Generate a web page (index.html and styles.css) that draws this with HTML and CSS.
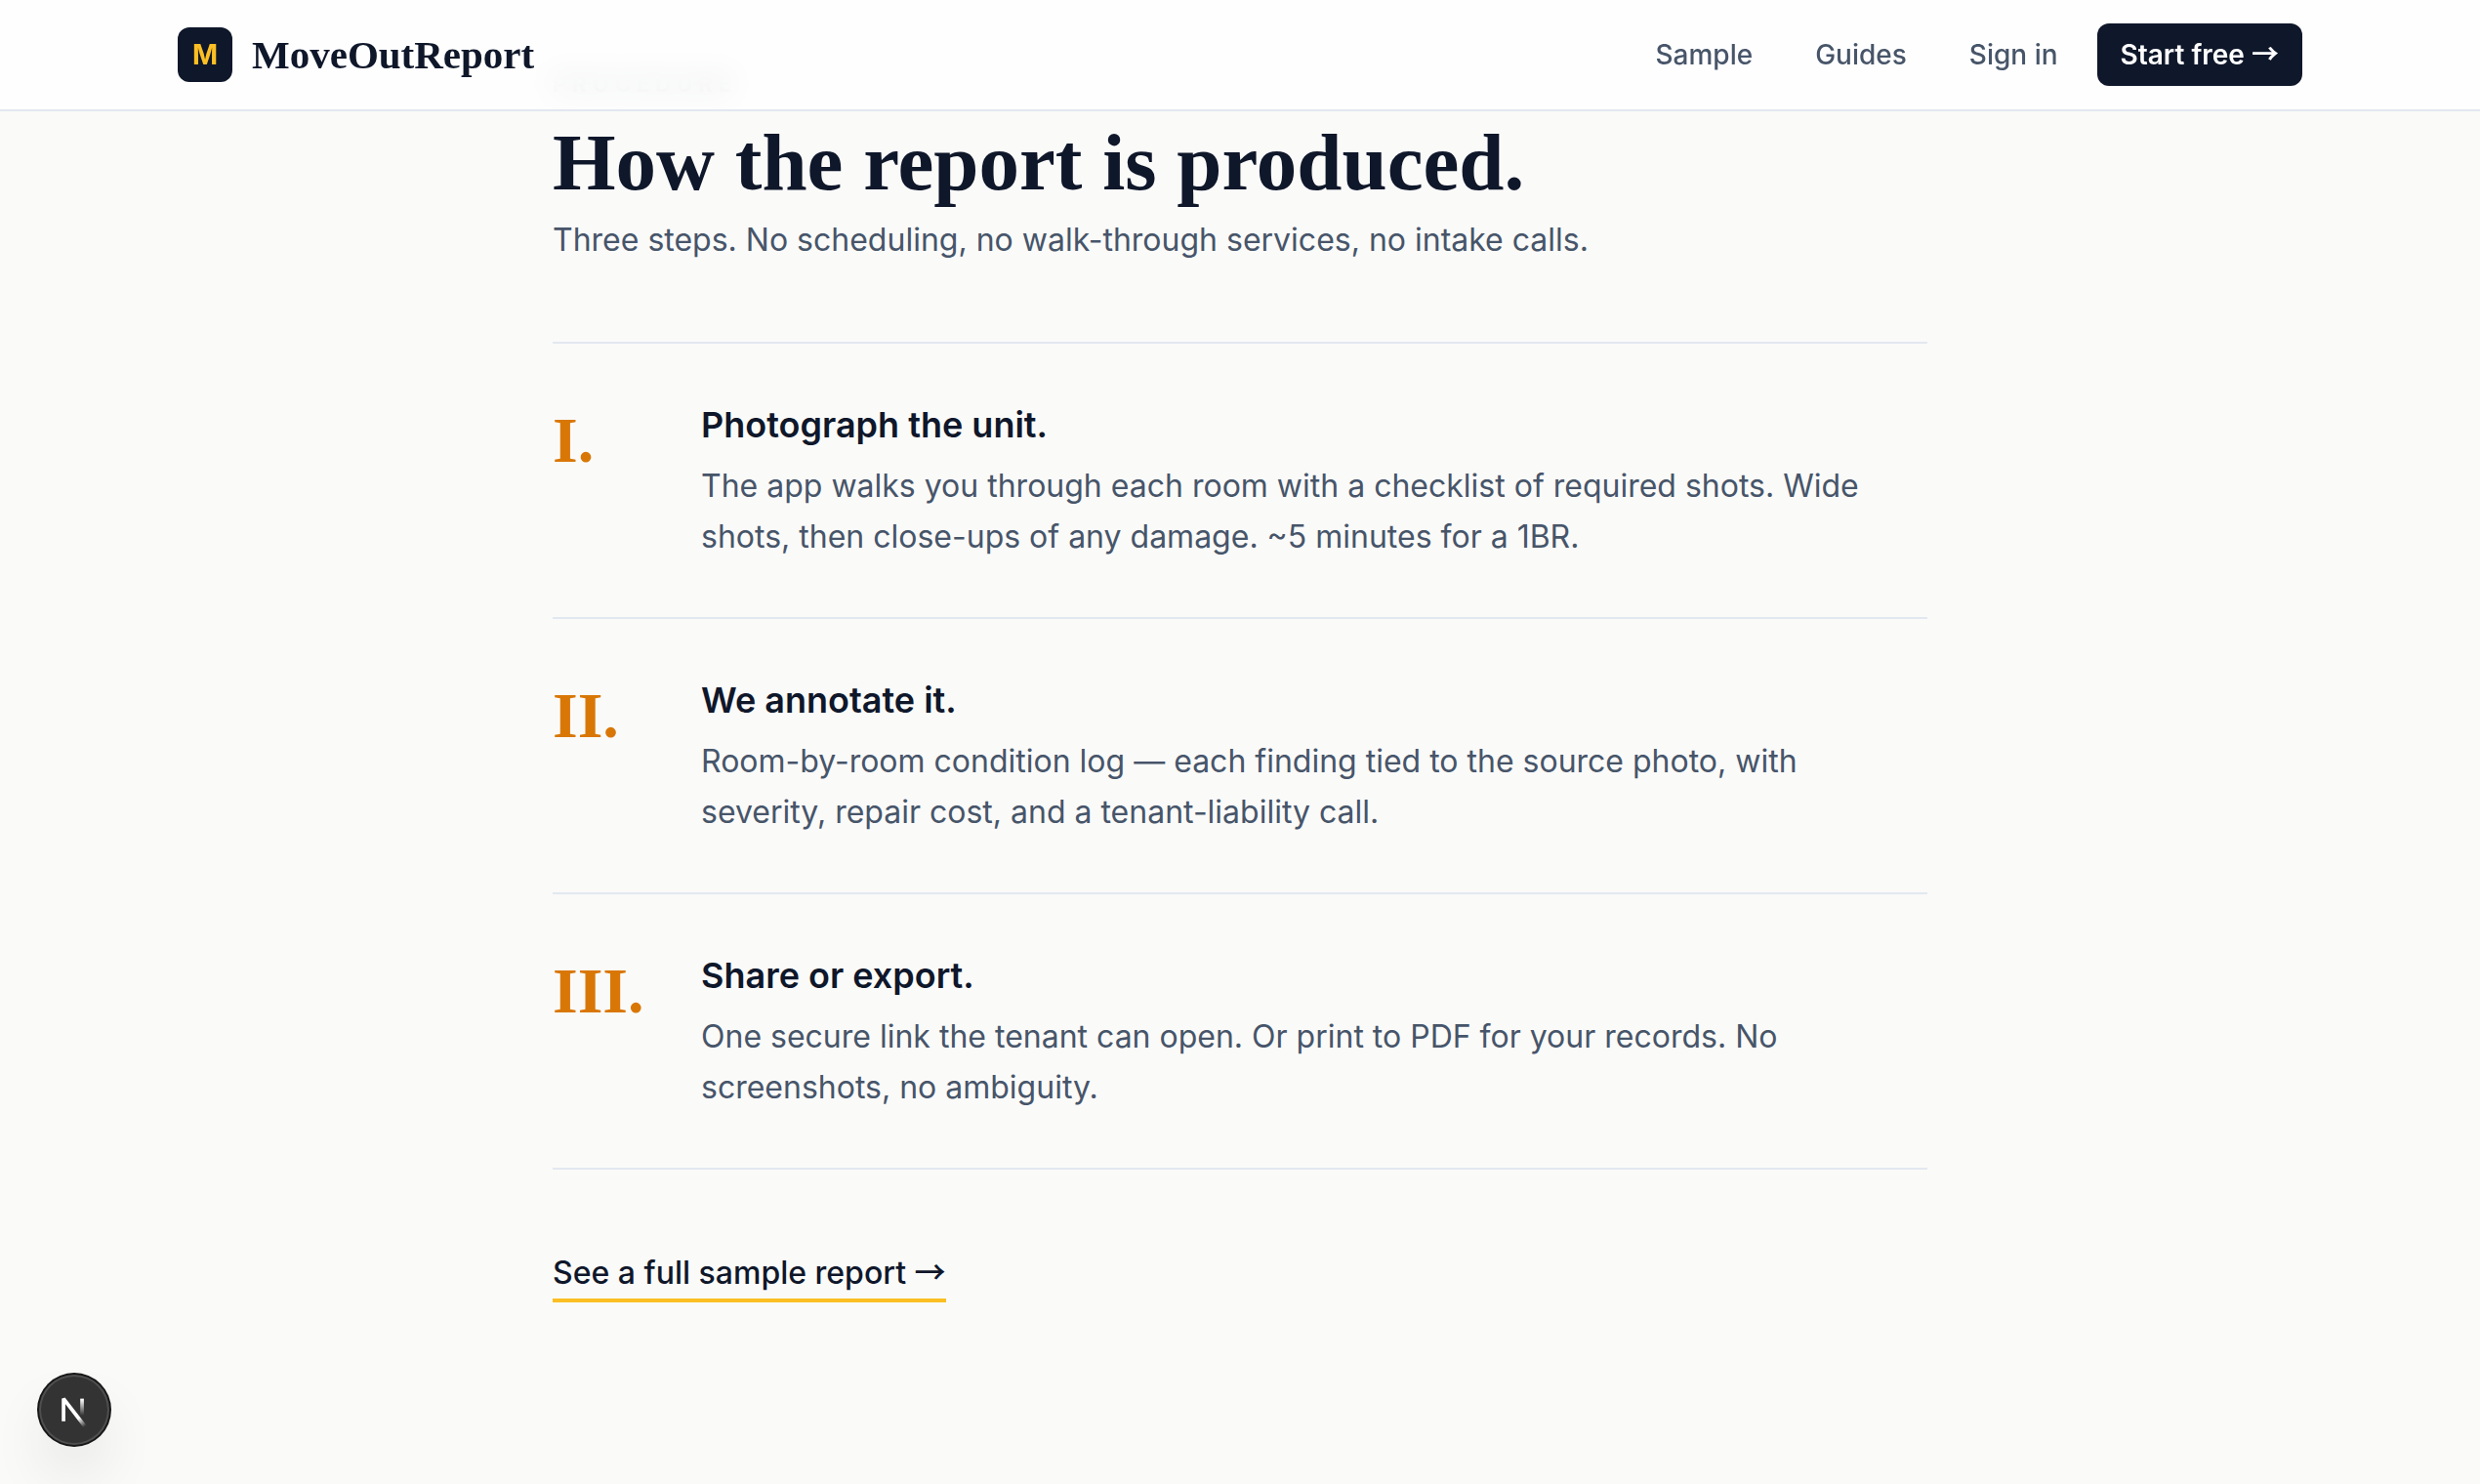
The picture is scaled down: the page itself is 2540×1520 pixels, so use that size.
FILE: index.html
```html
<!DOCTYPE html>
<html lang="en">
<head>
  <meta charset="utf-8">
  <meta name="viewport" content="width=device-width, initial-scale=1">
  <title>MoveOutReport</title>
  <link rel="stylesheet" href="styles.css">
</head>
<body>
  <header class="site-header">
    <div class="header-inner">
      <a class="brand" href="#">
        <span class="brand-mark">M</span>
        <span class="brand-name">MoveOutReport</span>
      </a>
      <nav class="nav">
        <a class="nav-link" href="#">Sample</a>
        <a class="nav-link" href="#">Guides</a>
        <a class="nav-link" href="#">Sign in</a>
        <a class="nav-cta" href="#">Start free <span class="arrow">→</span></a>
      </nav>
    </div>
  </header>

  <main class="procedure">
    <p class="eyebrow">Procedure</p>
    <h2 class="heading">How the report is produced.</h2>
    <p class="lede">Three steps. No scheduling, no walk-through services, no intake calls.</p>

    <ol class="steps">
      <li class="step">
        <span class="numeral">I.</span>
        <div class="step-body">
          <h3 class="step-title">Photograph the unit.</h3>
          <p class="step-text">The app walks you through each room with a checklist of required shots. Wide shots, then close-ups of any damage. ~5 minutes for a 1BR.</p>
        </div>
      </li>
      <li class="step">
        <span class="numeral">II.</span>
        <div class="step-body">
          <h3 class="step-title">We annotate it.</h3>
          <p class="step-text">Room-by-room condition log — each finding tied to the source photo, with severity, repair cost, and a tenant-liability call.</p>
        </div>
      </li>
      <li class="step">
        <span class="numeral">III.</span>
        <div class="step-body">
          <h3 class="step-title">Share or export.</h3>
          <p class="step-text">One secure link the tenant can open. Or print to PDF for your records. No screenshots, no ambiguity.</p>
        </div>
      </li>
    </ol>

    <a class="sample-link" href="#">See a full sample report <span class="arrow">→</span></a>
  </main>

  <button class="dev-badge" type="button" aria-label="Open developer tools">
    <svg class="dev-logo" viewBox="0 0 36 36" fill="none" aria-hidden="true">
      <defs>
        <linearGradient id="diagonal" x1="9.956" y1="11.123" x2="15.478" y2="17.967" gradientUnits="userSpaceOnUse">
          <stop stop-color="#fff"/>
          <stop offset="0.604" stop-color="#fff" stop-opacity="0"/>
          <stop offset="1" stop-color="#fff" stop-opacity="0"/>
        </linearGradient>
        <linearGradient id="stem" x1="11.822" y1="1.4" x2="11.792" y2="9.625" gradientUnits="userSpaceOnUse">
          <stop stop-color="#fff"/>
          <stop offset="1" stop-color="#fff" stop-opacity="0"/>
        </linearGradient>
      </defs>
      <g transform="translate(10.2 11.3)">
        <path d="M13.3 15.2 L2.34 1 V12.6" stroke="url(#diagonal)" stroke-width="1.86" stroke-linejoin="bevel"/>
        <path d="M11.825 1 V13.1" stroke="url(#stem)" stroke-width="1.86"/>
      </g>
    </svg>
  </button>
</body>
</html>
```
FILE: styles.css
```css
:root {
  --ink: #0f172a;
  --muted: #475569;
  --line: #e2e8f0;
  --paper: #fafaf9;
  --amber: #fbbf24;
  --serif: "Liberation Serif", "Times New Roman", serif;
  --sans: Inter, "Liberation Sans", sans-serif;
}

* {
  box-sizing: border-box;
}

body {
  margin: 0;
  background: var(--paper);
  color: var(--ink);
  font-family: var(--sans);
  font-size: 32px;
  line-height: 52px;
}

h2,
h3,
p,
ol {
  margin: 0;
  padding: 0;
}

a {
  color: inherit;
  text-decoration: none;
}

.arrow {
  font-family: "Noto Sans CJK SC", sans-serif;
  line-height: 1;
}

/* Header */
.site-header {
  position: fixed;
  inset: 0 0 auto;
  z-index: 10;
  background: rgba(255, 255, 255, 0.8);
  border-bottom: 2px solid var(--line);
  backdrop-filter: blur(16px);
}

.header-inner {
  display: flex;
  align-items: center;
  justify-content: space-between;
  max-width: 2304px;
  min-height: 112px;
  margin: 0 auto;
  padding: 0 64px;
}

.brand {
  display: flex;
  align-items: center;
  gap: 20px;
}

.brand-mark {
  display: grid;
  place-items: center;
  width: 56px;
  height: 56px;
  border-radius: 12px;
  background: var(--ink);
  color: var(--amber);
  font-size: 28px;
  font-weight: 700;
  line-height: 40px;
}

.brand-name {
  font-family: var(--serif);
  font-size: 41px;
  font-weight: 700;
}

.nav {
  display: flex;
  align-items: center;
  gap: 16px;
  font-size: 28px;
  line-height: 40px;
}

.nav-link {
  padding: 12px 24px;
  color: var(--muted);
  font-weight: 500;
}

.nav-cta {
  padding: 12px 24px;
  border-radius: 12px;
  background: var(--ink);
  color: #fff;
  font-weight: 600;
}

/* Procedure */
.procedure {
  max-width: 1536px;
  margin: 0 auto;
  padding: 68px 64px 96px;
}

.eyebrow {
  color: var(--muted);
  font-size: 22px;
  font-weight: 700;
  letter-spacing: 6px;
  line-height: 36px;
  text-transform: uppercase;
}

.heading {
  margin-top: 22px;
  font-family: var(--serif);
  font-size: 83px;
  font-weight: 700;
  line-height: 80px;
}

.lede {
  margin-top: 14px;
  color: var(--muted);
}

.steps {
  margin-top: 78px;
  border-top: 2px solid var(--line);
  list-style: none;
}

.step {
  display: grid;
  grid-template-columns: 120px 1fr;
  gap: 32px;
  padding: 56px 0;
  border-bottom: 2px solid var(--line);
}

.numeral {
  padding-top: 12px;
  color: #d97706;
  font-family: var(--serif);
  font-size: 66px;
  font-weight: 700;
  line-height: 62px;
}

.step-title {
  font-size: 36px;
  font-weight: 600;
  line-height: 54px;
}

.step-text {
  margin-top: 10px;
  color: var(--muted);
}

.sample-link {
  display: inline-block;
  margin-top: 80px;
  border-bottom: 4px solid var(--amber);
  font-weight: 500;
}

/* Developer badge */
.dev-badge {
  position: fixed;
  bottom: 40px;
  left: 40px;
  width: 72px;
  height: 72px;
  padding: 0;
  border: 0;
  border-radius: 50%;
  background: #333;
  box-shadow:
    0 0 0 2px #171717,
    inset 0 0 0 2px rgba(255, 255, 255, 0.14),
    0 32px 64px -16px rgba(0, 0, 0, 0.24);
}

.dev-logo {
  display: block;
  width: 72px;
  height: 72px;
}
```
